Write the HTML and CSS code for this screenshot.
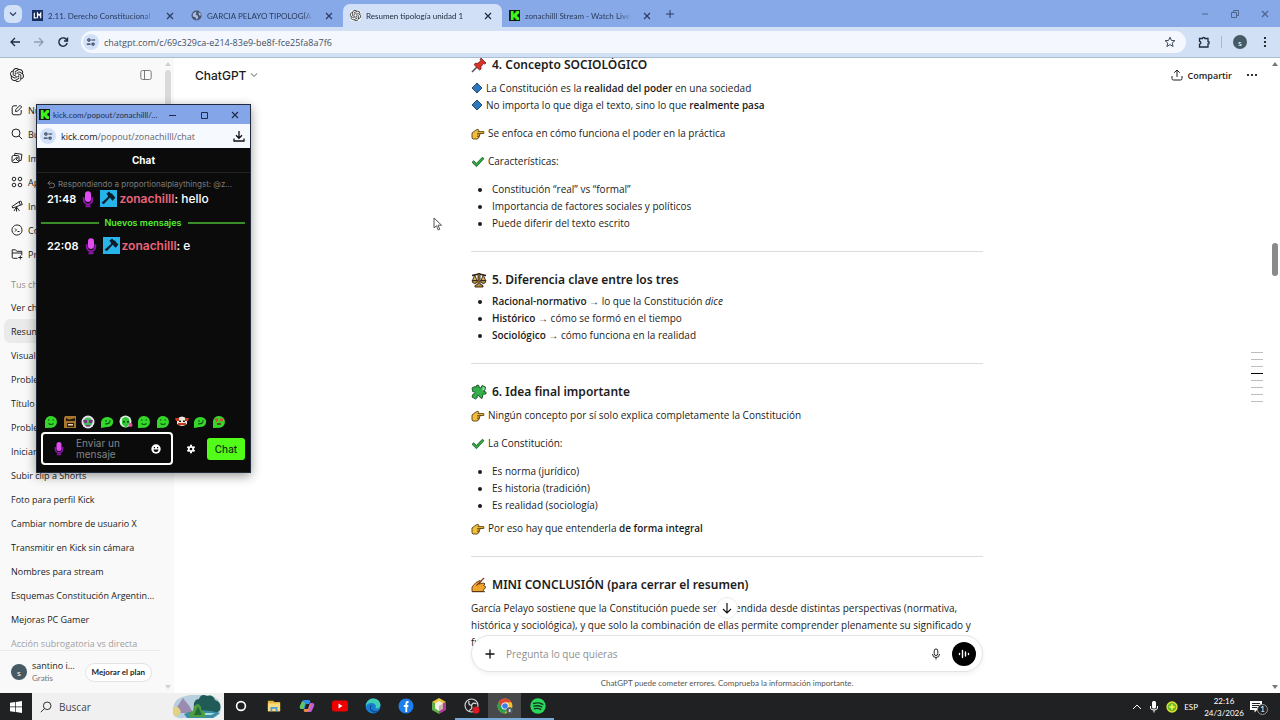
FILE: index.html
```
<!DOCTYPE html>
<html lang="es">
<head>
    <meta charset="UTF-8">
    <meta name="viewport" content="width=device-width, initial-scale=1.0">
    <title>Resumen tipología unidad 1</title>
    <link rel="stylesheet" href="styles.css">
</head>
<body>
    <!-- Shared icons -->
    <svg class="sprite" aria-hidden="true">
        <symbol id="i-close" viewBox="0 0 10 10"><path d="M2 2l6 6M8 2l-6 6" fill="none" stroke="currentColor" stroke-width="1.2"/></symbol>
        <symbol id="i-kick" viewBox="0 0 12 12"><path fill="#101810" d="M0 0h12v12H0z"/><path fill="#3df51c" d="M2 1h3v3h1V3h1V2h1V1h3v3h-1v1H9v2h1v1h1v3H8v-1H7V9H6V8H5v3H2z"/></symbol>
        <symbol id="i-gpt" viewBox="0 0 24 24"><path fill="currentColor" d="M22.2819 9.8211a5.9847 5.9847 0 0 0-.5157-4.9108 6.0462 6.0462 0 0 0-6.5098-2.9A6.0651 6.0651 0 0 0 4.9807 4.1818a5.9847 5.9847 0 0 0-3.9977 2.9 6.0462 6.0462 0 0 0 .7427 7.0966 5.98 5.98 0 0 0 .511 4.9107 6.051 6.051 0 0 0 6.5146 2.9001A5.9847 5.9847 0 0 0 13.2599 24a6.0557 6.0557 0 0 0 5.7718-4.2058 5.9894 5.9894 0 0 0 3.9977-2.9001 6.0557 6.0557 0 0 0-.7475-7.0729zm-9.022 12.6081a4.4755 4.4755 0 0 1-2.8764-1.0408l.1419-.0804 4.7783-2.7582a.7948.7948 0 0 0 .3927-.6813v-6.7369l2.02 1.1686a.071.071 0 0 1 .038.052v5.5826a4.504 4.504 0 0 1-4.4945 4.4944zm-9.6607-4.1254a4.4708 4.4708 0 0 1-.5346-3.0137l.142.0852 4.783 2.7582a.7712.7712 0 0 0 .7806 0l5.8428-3.3685v2.3324a.0804.0804 0 0 1-.0332.0615L9.74 19.9502a4.4992 4.4992 0 0 1-6.1408-1.6464zM2.3408 7.8956a4.485 4.485 0 0 1 2.3655-1.9728V11.6a.7664.7664 0 0 0 .3879.6765l5.8144 3.3543-2.0201 1.1685a.0757.0757 0 0 1-.071 0l-4.8303-2.7865A4.504 4.504 0 0 1 2.3408 7.872zm16.5963 3.8558L13.1038 8.364 15.1192 7.2a.0757.0757 0 0 1 .071 0l4.8303 2.7913a4.4944 4.4944 0 0 1-.6765 8.1042v-5.6772a.79.79 0 0 0-.407-.667zm2.0107-3.0231l-.142-.0852-4.7735-2.7818a.7759.7759 0 0 0-.7854 0L9.409 9.2297V6.8974a.0662.0662 0 0 1 .0284-.0615l4.8303-2.7866a4.4992 4.4992 0 0 1 6.6802 4.66zM8.3065 12.863l-2.02-1.1638a.0804.0804 0 0 1-.038-.0567V6.0742a4.4992 4.4992 0 0 1 7.3757-3.4537l-.142.0805L8.704 5.459a.7948.7948 0 0 0-.3927.6813zm1.0976-2.3654l2.602-1.4998 2.6069 1.4998v2.9994l-2.5974 1.4997-2.6067-1.4997Z"/></symbol>
        <symbol id="i-tune" viewBox="0 0 12 12"><g fill="none" stroke="#26364f" stroke-width="1.3"><circle cx="3.5" cy="3.5" r="1.4"/><path d="M6.5 3.5H11M1 8.5h4.5"/><circle cx="8.5" cy="8.5" r="1.4"/></g></symbol>
        <symbol id="i-mic-pink" viewBox="0 0 14 20"><path fill="none" stroke="#8d15a8" stroke-width="2.2" d="M2 8v3a5 5 0 0 0 10 0V8M7 16v3M4 18.500h6"/><rect x="3.500" y="1" width="7" height="12.500" rx="3.500" fill="#e04cf0"/></symbol>
        <symbol id="i-mod" viewBox="0 0 16 16"><path fill="#27b4ea" d="M0 0h16v16H0z"/><path fill="#0b1d2b" d="M6 3.500L8.500 1.500l1.500 1.500 1.500.5 1 1.500L14.500 7l-2.500 3-1.500-1-.5-1.200-1-.3-5.500 6L1.500 12 7.500 6.500 7.200 5z"/></symbol>
        <symbol id="e-hand" viewBox="0 0 14 12"><path fill="#f2bd3c" stroke="#5a420e" stroke-width=".9" stroke-linejoin="round" d="M1 5l4-3 2-.8.800 1.100L7 3.600h5.800v1.900H9v1.300h-.5v1.500H8v1.400H7.200L6.500 11H2L1 10z"/><path stroke="#5a420e" stroke-width=".7" fill="none" d="M6 5.500h3M6 7h2.600M6 8.500h2"/></symbol>
        <symbol id="e-check" viewBox="0 0 14 12"><path fill="#31a641" stroke="#17622a" stroke-width=".8" stroke-linejoin="round" d="M1 6.300l1.700-1.600 2.800 2.600L11.300 1.300 13 2.600 5.500 10.700z"/></symbol>
        <symbol id="e-diamond" viewBox="0 0 12 12"><path fill="#2b78bd" stroke="#1b3d60" stroke-width=".9" stroke-linejoin="round" d="M6 1l5 5-5 5-5-5z"/></symbol>
        <symbol id="i-chevron" viewBox="0 0 10 10"><path fill="none" stroke="currentColor" stroke-width="1.200" d="M2 3.500l3 3 3-3"/></symbol>
        <symbol id="m-blob" viewBox="0 0 14 14"><path fill="#35d72b" d="M1 13V6a6 6 0 1 1 7 6.800z"/><path fill="none" stroke="#0d4a12" stroke-width="1.200" d="M4 5h1.500M8.500 5H10M4.500 8.500q2.500 2 5 0"/></symbol>
        <symbol id="m-lean" viewBox="0 0 14 14"><path fill="#35d72b" d="M1 13V7q1-5 7-5 6 1 5 6-1 4-6 4z"/><path fill="none" stroke="#0d4a12" stroke-width="1.200" d="M5 6h2M9 6h2M5 9q3 0 5-1.500"/></symbol>
    </svg>

    <!-- Browser tabs -->
    <header class="tabs">
        <button class="tab-search" aria-label="Buscar pestañas"><svg class="s10"><use href="#i-chevron"/></svg></button>
        <div class="tab">
            <svg class="favicon" viewBox="0 0 12 12"><path fill="#142c5e" d="M0 0h12v12H0z"/><path fill="none" stroke="#fff" stroke-width="1.300" d="M2.500 3v5.500H5M6 9V3.500l1.800 2.500 1.700-2.500V9"/></svg>
            <a class="tab-title" href="#">2.11. Derecho Constitucional y Político</a>
            <button class="tab-close" aria-label="Cerrar"><svg class="s10"><use href="#i-close"/></svg></button>
        </div>
        <div class="tab">
            <svg class="favicon" viewBox="0 0 12 12"><circle cx="6" cy="6" r="5.500" fill="#46566f"/><path fill="#a9bde6" d="M2 4l3-2 1 1-1 2 2 1 1 2-2 3-1-3-3-1zM8 3l2 0 1 3-2 0z"/></svg>
            <a class="tab-title" href="#">GARCIA PELAYO TIPOLOGÍA DE LAS</a>
            <button class="tab-close" aria-label="Cerrar"><svg class="s10"><use href="#i-close"/></svg></button>
        </div>
        <div class="tab active">
            <svg class="favicon gpt-fav"><use href="#i-gpt"/></svg>
            <a class="tab-title" href="#">Resumen tipología unidad 1</a>
            <button class="tab-close" aria-label="Cerrar"><svg class="s10"><use href="#i-close"/></svg></button>
        </div>
        <div class="tab">
            <svg class="favicon"><use href="#i-kick"/></svg>
            <a class="tab-title" href="#">zonachilll Stream - Watch Live on Kick</a>
            <button class="tab-close" aria-label="Cerrar"><svg class="s10"><use href="#i-close"/></svg></button>
        </div>
        <button class="new-tab" aria-label="Nueva pestaña"><svg class="s10" viewBox="0 0 10 10"><path d="M5 1v8M1 5h8" fill="none" stroke="currentColor"/></svg></button>
        <div class="window-buttons">
            <button aria-label="Minimizar"><svg class="s10" viewBox="0 0 10 10"><path d="M2 5h6" fill="none" stroke="currentColor"/></svg></button>
            <button aria-label="Restaurar"><svg class="s10" viewBox="0 0 10 10"><path d="M1.500 3.500h5v5h-5zM3.500 3.500v-2h5v5h-2" fill="none" stroke="currentColor"/></svg></button>
            <button aria-label="Cerrar ventana"><svg class="s10"><use href="#i-close"/></svg></button>
        </div>
    </header>

    <!-- Address bar -->
    <nav class="toolbar">
        <button aria-label="Atrás"><svg class="s12" viewBox="0 0 12 12"><path d="M11 6H2M6 2L2 6l4 4" fill="none" stroke="#1f2b3d" stroke-width="1.300"/></svg></button>
        <button aria-label="Adelante"><svg class="s12" viewBox="0 0 12 12"><path d="M1 6h9M6 2l4 4-4 4" fill="none" stroke="#8d9db8" stroke-width="1.300"/></svg></button>
        <button aria-label="Recargar"><svg class="s12" viewBox="0 0 12 12"><path d="M10 4.500A4.200 4.200 0 1 0 10.200 7M10.500 1.500v3.500H7" fill="none" stroke="#1f2b3d" stroke-width="1.400"/></svg></button>
        <div class="address">
            <span class="site-info"><svg class="s10"><use href="#i-tune"/></svg></span>
            <input class="url" type="text" aria-label="Dirección" value="chatgpt.com/c/69c329ca-e214-83e9-be8f-fce25fa8a7f6">
            <button aria-label="Favorito"><svg class="s12" viewBox="0 0 12 12"><path d="M6 1.200l1.400 3.200 3.500.3-2.700 2.300.9 3.500L6 8.600l-3.100 1.900.9-3.500L1.100 4.700l3.500-.3z" fill="none" stroke="#3c4656"/></svg></button>
        </div>
        <button aria-label="Extensiones"><svg class="s12" viewBox="0 0 12 12"><path d="M1.500 2.500h3a1.200 1.200 0 0 1 2.400 0H10v3a1.200 1.200 0 0 1 0 2.400V11H1.500V8.200a1.400 1.400 0 0 0 0-2.800z" fill="none" stroke="#1f2b3d" stroke-width="1.300"/></svg></button>
        <span class="toolbar-sep"></span>
        <button class="avatar" aria-label="Perfil">s</button>
        <button aria-label="Menú"><svg class="s12" viewBox="0 0 12 12"><circle cx="6" cy="2" r="1.100"/><circle cx="6" cy="6" r="1.100"/><circle cx="6" cy="10" r="1.100"/></svg></button>
    </nav>

    <div class="page">
        <aside class="sidebar">
            <div class="sidebar-top">
                <svg class="s14"><use href="#i-gpt"/></svg>
                <button aria-label="Cerrar barra lateral"><svg class="s12" viewBox="0 0 12 12"><rect x=".8" y="1.500" width="10.400" height="9" rx="1.800" fill="none" stroke="#7a7a7a"/><path d="M4.500 1.500v9" stroke="#7a7a7a"/></svg></button>
            </div>
            <ul class="menu">
                <li><a href="#"><svg class="s12" viewBox="0 0 12 12"><path d="M6 1.800H3A1.800 1.800 0 0 0 1.200 3.600V9A1.800 1.800 0 0 0 3 10.800h5.400A1.800 1.800 0 0 0 10.200 9V6M4.500 7.500l.3-2L9 1.300l1.700 1.700-4.200 4.200z"/></svg>Nuevo chat</a></li>
                <li><a href="#"><svg class="s12" viewBox="0 0 12 12"><circle cx="5" cy="5" r="4"/><path d="M8 8l3.200 3.200"/></svg>Buscar chats</a></li>
                <li><a href="#"><svg class="s12" viewBox="0 0 12 12"><rect x="1" y="3.500" width="7" height="7" rx="1.500"/><path d="M3.500 3.500l.4-2.200 7 1-.8 6.200-2 .2M1.500 9l3-2.500L8 10"/><circle cx="6" cy="5.800" r=".7"/></svg>Imágenes</a></li>
                <li><a href="#"><svg class="s12" viewBox="0 0 12 12"><circle cx="3" cy="3" r="1.800"/><circle cx="9" cy="3" r="1.800"/><circle cx="3" cy="9" r="1.800"/><circle cx="9" cy="9" r="1.800"/></svg>Aplicaciones</a></li>
                <li><a href="#"><svg class="s12" viewBox="0 0 12 12"><path d="M1 6.500l7-4.700 1.500 3.400-7.800 2.800zM8 1.800l1.800-.8 1.500 3.500-1.800.7M5.500 7v4.500M5.500 7L3 11M5.500 7l3 4"/></svg>Investigación avanzada</a></li>
                <li><a href="#"><svg class="s12" viewBox="0 0 12 12"><path d="M6 1a5 5 0 1 1-4.500 7.200A5 5 0 0 1 6 1zM4 4.500L5.500 6 4 7.500M6.500 7.500h2"/></svg>Codex</a></li>
                <li><a href="#"><svg class="s12" viewBox="0 0 12 12"><path d="M6.500 10.300H2.300a1.100 1.100 0 0 1-1.100-1.100V1.800H4.500l1.300 1.500h5v4M1.200 5h9.500M9.300 7.500v4M7.300 9.500h4"/></svg>Proyectos</a></li>
            </ul>
            <h2 class="chats-title">Tus chats</h2>
            <ul class="chats">
                <li><a href="#">Ver chat de Kick</a></li>
                <li><a class="current" href="#">Resumen tipología unidad 1</a></li>
                <li><a href="#">Visualizar chat</a></li>
                <li><a href="#">Problema de audio</a></li>
                <li><a href="#">Título para stream</a></li>
                <li><a href="#">Problema con cámara</a></li>
                <li><a href="#">Iniciar stream</a></li>
                <li><a href="#">Subir clip a Shorts</a></li>
                <li><a href="#">Foto para perfil Kick</a></li>
                <li><a href="#">Cambiar nombre de usuario X</a></li>
                <li><a href="#">Transmitir en Kick sin cámara</a></li>
                <li><a href="#">Nombres para stream</a></li>
                <li><a href="#">Esquemas Constitución Argentina 1853</a></li>
                <li><a href="#">Mejoras PC Gamer</a></li>
                <li><a class="faded" href="#">Acción subrogatoria vs directa</a></li>
            </ul>
            <div class="account">
                <span class="avatar">s</span>
                <div class="account-name">
                    <span class="name">santino ignacio</span>
                    <span class="plan">Gratis</span>
                </div>
                <button class="upgrade">Mejorar el plan</button>
            </div>
            <div class="side-scroll"><span class="arrow-up"></span><span class="side-thumb"></span><span class="arrow-down"></span></div>
        </aside>

        <main class="chat">
            <article class="answer">
                <h3><svg class="emoji" viewBox="0 0 16 16"><path d="M1 15l5-5" stroke="#555" stroke-width="1.600"/><path fill="#d8322b" stroke="#6b1c18" stroke-width=".8" stroke-linejoin="round" d="M10 1l5 5-1.500 1-1-.5-2.500 3 0 2.500-1.500 1L3.200 7.800l1-1.500 2.600 0 3-2.600-.6-1.200z"/></svg>4. Concepto SOCIOLÓGICO</h3>
                <p><svg class="bullet-icon"><use href="#e-diamond"/></svg>La Constitución es la <b>realidad del poder</b> en una sociedad<br>
                <svg class="bullet-icon"><use href="#e-diamond"/></svg>No importa lo que diga el texto, sino lo que <b>realmente pasa</b></p>
                <p><svg class="inline-emoji"><use href="#e-hand"/></svg>Se enfoca en cómo funciona el poder en la práctica</p>
                <p><svg class="inline-emoji"><use href="#e-check"/></svg>Características:</p>
                <ul>
                    <li>Constitución “real” vs “formal”</li>
                    <li>Importancia de factores sociales y políticos</li>
                    <li>Puede diferir del texto escrito</li>
                </ul>
                <hr>
                <h3><svg class="emoji" viewBox="0 0 16 16"><path fill="none" stroke="#2a2013" stroke-width="1.500" d="M1 3.500l7-1.500 7 1.500"/><path fill="#b98a3c" stroke="#2a2013" stroke-width=".9" d="M7 1.500h2V12l3 1.500V15H4v-1.500L7 12zM1 8.500h5.500q-.3 3-2.700 3T1 8.500zM9.500 8.500H15q-.3 3-2.700 3t-2.800-3z"/><path fill="#e0b65c" stroke="#2a2013" stroke-width=".9" d="M3.700 3L1.500 8.500H6zM12.300 3l-2.200 5.500h4.500z"/></svg>5. Diferencia clave entre los tres</h3>
                <ul>
                    <li><b>Racional-normativo</b> → lo que la Constitución <i>dice</i></li>
                    <li><b>Histórico</b> → cómo se formó en el tiempo</li>
                    <li><b>Sociológico</b> → cómo funciona en la realidad</li>
                </ul>
                <hr>
                <h3><svg class="emoji" viewBox="0 0 16 16"><path fill="#32b04a" stroke="#174f27" stroke-width=".9" stroke-linejoin="round" d="M1 4l3-1.500 1.200.8Q5 .8 7 1q1.700.4 1 2.500l2 .5 1-2.500 3.500 1.500L14 6l-1.500 1.200 2.500.9q.8 2-1.200 2.100l-1.600-.3L11 14.500 8.500 13q-.2-2-1.700-1.800-1.300.6-.4 2.300L4.500 15 1 13l1.200-3Q4.200 10 4 8.500 3.200 7 1.800 7.800z"/><path fill="#a5d6c0" d="M11.500 2.800l2.300 1-.5 2-1.800 1z"/></svg>6. Idea final importante</h3>
                <p><svg class="inline-emoji"><use href="#e-hand"/></svg>Ningún concepto por sí solo explica completamente la Constitución</p>
                <p><svg class="inline-emoji"><use href="#e-check"/></svg>La Constitución:</p>
                <ul>
                    <li>Es norma (jurídico)</li>
                    <li>Es historia (tradición)</li>
                    <li>Es realidad (sociología)</li>
                </ul>
                <p><svg class="inline-emoji"><use href="#e-hand"/></svg>Por eso hay que entenderla <b>de forma integral</b></p>
                <hr>
                <h3><svg class="emoji" viewBox="0 0 16 16"><path fill="#f0a62d" stroke="#5c3510" stroke-width=".9" stroke-linejoin="round" d="M1 14.500V10l4-4.500 4-2 1 1-2 2.500 5-1 1 1-1.500 1.500 2 1-.5 2-1.500 1-.5 2z"/><path stroke="#8a3a1c" stroke-width="1.300" d="M13 1L5.500 8.500"/><path stroke="#5c3510" d="M1 14.700h13"/></svg>MINI CONCLUSIÓN (para cerrar el resumen)</h3>
                <p>García Pelayo sostiene que la Constitución puede ser entendida desde distintas perspectivas (normativa, histórica y sociológica), y que solo la combinación de ellas permite comprender plenamente su significado y función.</p>
            </article>

            <header class="chat-header">
                <button class="model">ChatGPT <svg class="s10"><use href="#i-chevron"/></svg></button>
                <button class="share"><svg class="s12" viewBox="0 0 12 12"><path d="M6 8V1.200M3.300 3.700L6 1l2.700 2.700M1 7v2.500A1.500 1.500 0 0 0 2.500 11h7A1.500 1.500 0 0 0 11 9.500V7" fill="none" stroke="currentColor"/></svg>Compartir</button>
                <button class="more" aria-label="Más"><svg class="s12" viewBox="0 0 12 12"><circle cx="2" cy="6" r="1.100"/><circle cx="6" cy="6" r="1.100"/><circle cx="10" cy="6" r="1.100"/></svg></button>
            </header>

            <div class="composer-area">
                <button class="scroll-down" aria-label="Bajar"><svg class="s12" viewBox="0 0 12 12"><path d="M6 1v10M2 7l4 4 4-4" fill="none" stroke="#111" stroke-width="1.200"/></svg></button>
                <form class="composer">
                    <button type="button" aria-label="Adjuntar"><svg class="s12" viewBox="0 0 12 12"><path d="M6 1.500v9M1.500 6h9" fill="none" stroke="#111" stroke-width="1.300"/></svg></button>
                    <input type="text" placeholder="Pregunta lo que quieras" aria-label="Pregunta lo que quieras">
                    <button type="button" aria-label="Dictar"><svg class="s12" viewBox="0 0 12 12"><rect x="4.200" y="1" width="3.600" height="6.500" rx="1.800" fill="none" stroke="#222"/><path d="M2.500 6a3.500 3.500 0 0 0 7 0M6 9.500v2" fill="none" stroke="#222"/></svg></button>
                    <button type="button" class="voice" aria-label="Voz"><svg class="s12" viewBox="0 0 12 12"><path d="M1.500 5.500v1M4.500 2.500v7M7.500 4v4M10.500 5.500v1" fill="none" stroke="#fff" stroke-width="1.400" stroke-linecap="round"/></svg></button>
                </form>
                <p class="disclaimer">ChatGPT puede cometer errores. Comprueba la información importante.</p>
            </div>

            <div class="outline"><span></span><span></span><span></span><span class="on"></span><span></span><span></span><span></span><span></span></div>
            <div class="page-scroll"><span class="arrow-up"></span><span class="page-thumb"></span><span class="arrow-down"></span></div>
        </main>
    </div>

    <!-- Kick chat popup -->
    <section class="popup">
        <div class="popup-title">
            <svg class="favicon"><use href="#i-kick"/></svg>
            <span>kick.com/popout/zonachilll/chat - Chat</span>
            <button aria-label="Minimizar"><svg class="s10" viewBox="0 0 10 10"><path d="M1 5.500h7" stroke="currentColor"/></svg></button>
            <button aria-label="Maximizar"><svg class="s10" viewBox="0 0 10 10"><path d="M2.500 2.500h6v6h-6z" fill="none" stroke="currentColor"/></svg></button>
            <button aria-label="Cerrar"><svg class="s10"><use href="#i-close"/></svg></button>
        </div>
        <div class="popup-address">
            <span class="site-info"><svg class="s10"><use href="#i-tune"/></svg></span>
            <span class="popup-url">kick.com<em>/popout/zonachilll/chat</em></span>
            <button aria-label="Descargas"><svg class="s12" viewBox="0 0 12 12"><path d="M6 1v7M3 5.300l3 3 3-3M1 8.500V11h10V8.500" fill="none" stroke="#111" stroke-width="1.300"/></svg></button>
        </div>
        <h2 class="popup-heading">Chat</h2>
        <div class="messages">
            <p class="reply"><svg class="reply-icon" viewBox="0 0 10 10"><path d="M3.500 1L1 3.500 3.500 6M1 3.500h5a2.500 2.500 0 0 1 0 5H2.500" fill="none" stroke="currentColor"/></svg><span>Respondiendo a proportionalplaythingst: @zonachilll</span></p>
            <p class="message">21:48 <svg class="badge-mic"><use href="#i-mic-pink"/></svg><svg class="badge-mod"><use href="#i-mod"/></svg><b>zonachilll</b><span>: hello</span></p>
            <div class="divider">Nuevos mensajes</div>
            <p class="message">22:08 <svg class="badge-mic"><use href="#i-mic-pink"/></svg><svg class="badge-mod"><use href="#i-mod"/></svg><b>zonachilll</b><span>: e</span></p>
        </div>
        <div class="emotes">
            <svg><use href="#m-blob"/></svg>
            <svg viewBox="0 0 14 14"><path fill="#a8762c" d="M2 1h11v12H1V3z"/><path fill="#2b1b0b" d="M3 3l3 1.500L9 4l3-1v3H3zM4 8h7v4H4z"/><path fill="#e8d9bd" d="M5 9h5v1.500H5z"/></svg>
            <svg viewBox="0 0 14 14"><circle cx="7" cy="7" r="6.500" fill="#e9e2ea"/><circle cx="7" cy="7" r="4.500" fill="#46ba5d"/><path fill="#7b3286" d="M2 5h4v3H3zM8 5h4l-1 3H8zM5 10h4v1.500H5z"/></svg>
            <svg><use href="#m-lean"/></svg>
            <svg viewBox="0 0 14 14"><circle cx="6.500" cy="6.500" r="6" fill="#d8f2dc"/><path fill="#35c63a" d="M3 4q4-4 7 0l1 4-4 5-4-4z"/><path fill="#133f16" d="M4 6h2v1.500H4zM8 6h2v1.500H8z"/><circle cx="11.500" cy="10" r="2" fill="#e84a9c"/></svg>
            <svg><use href="#m-blob"/></svg>
            <svg><use href="#m-blob"/></svg>
            <svg viewBox="0 0 14 14"><path fill="#ece6dc" d="M2 4q5-5 10 0v5q-5 4-10 0z"/><path fill="#c33d1d" d="M0 3h4v3H1zM10 3h4l-1 3h-3zM3 8h8v2H3z"/><path fill="#2a1512" d="M4 5.500h2V7H4zM8 5.500h2V7H8z"/></svg>
            <svg><use href="#m-lean"/></svg>
            <svg viewBox="0 0 14 14"><path fill="#35d72b" d="M1 13V6a6 6 0 1 1 7 6.800z"/><path fill="#e2463a" d="M2.500 3.500H6V6L4.500 7zM8 3.500h3.500L10 7 8 6z"/><path d="M5 9h4" stroke="#6b2118" stroke-width="1.500"/></svg>
        </div>
        <form class="send">
            <label class="send-box">
                <svg class="badge-mic"><use href="#i-mic-pink"/></svg>
                <textarea rows="2" placeholder="Enviar un mensaje" aria-label="Enviar un mensaje"></textarea>
                <svg class="s10" viewBox="0 0 10 10"><circle cx="5" cy="5" r="4.700" fill="#fff"/><path fill="#0b0b0b" d="M2.800 3h1.200v1.300H2.800zM6 3h1.200v1.300H6zM2.300 5.500h5.400Q7 8 5 8T2.300 5.500z"/></svg>
            </label>
            <button type="button" class="gear" aria-label="Ajustes"><svg class="s10" viewBox="0 0 10 10"><path d="M5 .8v8.400M1.400 2.900l7.200 4.200M8.600 2.900L1.400 7.100" stroke="#fff" stroke-width="2"/><circle cx="5" cy="5" r="3" fill="#fff"/><circle cx="5" cy="5" r="1.300" fill="#0b0b0b"/></svg></button>
            <button type="button" class="send-button">Chat</button>
        </form>
    </section>

    <svg class="cursor" viewBox="0 0 10 14"><path fill="#fff" stroke="#444" stroke-width=".9" d="M1 1v10l2.500-2.300L5.200 13l1.600-.7L5 8.200h3.500z"/></svg>

    <!-- Windows taskbar -->
    <footer class="taskbar">
        <button class="start" aria-label="Inicio"><svg class="s12" viewBox="0 0 12 12"><path fill="#fff" d="M0 1.800l5.300-.8v4.600H0zM6 .9L12 0v5.600H6zM0 6.300h5.300V11L0 10.200zM6 6.300h6V12l-6-.9z"/></svg></button>
        <label class="search">
            <svg class="s12" viewBox="0 0 12 12"><circle cx="7.200" cy="4.800" r="3.800" fill="none" stroke="#333"/><path d="M4.500 7.500L.8 11.200" stroke="#333"/></svg>
            <input type="text" placeholder="Buscar" aria-label="Buscar">
            <svg class="search-art" viewBox="0 0 50 26"><path fill="#b8cfe0" d="M1 20Q0 6 10 3l8-2h20q10 3 11 12 0 9-8 11H12Q3 25 1 20z"/><path fill="#9b8bb0" d="M3 16l8-12 7 9 3 6H3z"/><path fill="#e3d27e" d="M1 14q5-4 8 4l-5 5Q0 19 1 14z"/><path fill="#215b57" d="M22 14q-1-9 5-9 2-6 8-3 6-2 8 4 7 2 5 10l-4 4-20-1z"/><path fill="#3a8da4" d="M12 20q16-7 36-1l-7 5H15z"/><path fill="#a4dde4" d="M31 19h12l-4 2h-9z"/><path fill="#4f9f3f" d="M17 23q0-5 4-6 0-6 5-7 4 2 3 6 5 1 4 7z"/><path fill="#236b3c" d="M22 21l4-9 4 9z"/></svg>
        </label>
        <div class="apps">
            <button aria-label="Cortana"><svg class="s12" viewBox="0 0 12 12"><circle cx="6" cy="6" r="4.400" fill="none" stroke="#fff" stroke-width="1.600"/></svg></button>
            <button aria-label="Explorador"><svg class="s14" viewBox="0 0 16 16"><path fill="#e7b53c" d="M1 2h6l1.500 1.500H15V14H1z"/><path fill="#f9dd7d" d="M1 5h14v9H1z"/><path fill="#4a9bdb" d="M4 9h8v5h-2v-3H6v3H4z"/></svg></button>
            <button aria-label="Copilot"><svg class="s16" viewBox="0 0 16 16"><path fill="#2f8fe8" d="M5 2h5q1 0 1.500 2L10 6H7L5.500 11H3Q0 11 1 8l2-4.500Q3.500 2 5 2z"/><path fill="#65c658" d="M1 8l2-4.500L6 5 4.500 11H3Q0 11 1 8z"/><path fill="#c35be0" d="M11 5h2q3 0 2 3l-2 4.500Q12.500 14 11 14H8L9 11z"/><path fill="#ee8c46" d="M5.500 11H9l2-5 1 1-2 5q-.8 2-2.500 2H6q-1 0-1.500-2z"/></svg></button>
            <button aria-label="YouTube"><svg class="s16" viewBox="0 0 16 16"><rect y="2.500" width="16" height="11" rx="2.500" fill="#f00000"/><path fill="#fff" d="M6.500 5.500l4 2.500-4 2.500z"/></svg></button>
            <button aria-label="Edge"><svg class="s16" viewBox="0 0 16 16"><circle cx="8" cy="8" r="7.500" fill="#1a7cd0"/><path fill="#3ecfb5" d="M1 6Q4 0 9 .6q6 .9 6.500 6.400Q15 11 10.500 10.500 12 6 7.500 5 3 4.500 1 8z"/><path fill="#0c4a90" d="M5 8q-1 5 4 6.500 3 .5 5-2-5 2-7.500-1Q5 10 7 7z"/></svg></button>
            <button aria-label="Facebook"><svg class="s16" viewBox="0 0 16 16"><circle cx="8" cy="8" r="7.500" fill="#1b80ee"/><path d="M10.500 4H9.700Q8.300 4 8.300 5.500V14M5.800 8h4.500" stroke="#fff" stroke-width="1.800" fill="none"/></svg></button>
            <button aria-label="Juego"><svg class="s16" viewBox="0 0 16 16"><path fill="#e9c83a" d="M8 0l7 4-7 4-7-4z"/><path fill="#62ae49" d="M1 4l7 4v8l-7-4z"/><path fill="#b23b99" d="M15 4L8 8v8l7-4z"/><path fill="#f3eee6" d="M8 3l4 2.500v5L8 13l-4-2.500v-5z"/><path fill="#c9b5a5" d="M8 8l4-2.500v5L8 13z"/></svg></button>
            <button class="open" aria-label="OBS"><svg class="s16" viewBox="0 0 16 16"><circle cx="7.500" cy="7.500" r="6.500" fill="#222" stroke="#ddd" stroke-width="1.100"/><path d="M7.500 7.500Q4 7 5 3M7.500 7.500Q9 3.500 12.500 6M7.500 7.500Q9 11 5 12.500" fill="none" stroke="#ddd" stroke-width="1.200"/><circle cx="12" cy="12" r="3.500" fill="#e01822"/></svg></button>
            <button class="open focused" aria-label="Chrome"><svg class="s16" viewBox="0 0 16 16"><circle cx="8" cy="8" r="7.500" fill="#f2c12d"/><path fill="#dd4536" d="M1.500 4.300A7.500 7.500 0 0 1 14.500 4.300H8L4.700 10z"/><path fill="#2e9e4f" d="M1.500 4.300A7.500 7.500 0 0 0 7.500 15.500L11 9.500 5 9.700z"/><circle cx="8" cy="8" r="3.600" fill="#fff"/><circle cx="8" cy="8" r="2.800" fill="#3b7ded"/><circle cx="12.500" cy="12.500" r="3.200" fill="#4b5c69"/><path d="M13.500 11.500h-1.500v1h1.300v1h-1.600" fill="none" stroke="#fff" stroke-width=".7"/></svg></button>
            <button class="open" aria-label="Spotify"><svg class="s16" viewBox="0 0 16 16"><circle cx="8" cy="8" r="7.700" fill="#2cd75e"/><path d="M3.500 5.500q5-1.500 9.300.8M4 8.200q4.300-1.200 7.800.8M4.500 10.700q3.500-.9 6.300.7" fill="none" stroke="#12351c" stroke-width="1.400" stroke-linecap="round"/></svg></button>
        </div>
        <div class="tray">
            <svg class="s10" viewBox="0 0 10 10"><path d="M1 7l4-4 4 4" fill="none" stroke="#fff"/></svg>
            <svg class="s12" viewBox="0 0 12 12"><rect x="4" y="0" width="4" height="7.500" rx="1.500" fill="#fff"/><path d="M2.500 5v2q0 2 3.500 2t3.500-2V5M6 9v2.500" fill="none" stroke="#fff"/></svg>
            <svg class="s12" viewBox="0 0 12 12"><circle cx="6" cy="6" r="5" fill="#65bd28" stroke="#e8e32f" stroke-width="1.300"/><path d="M6 3.300v5.400M3.300 6h5.400" stroke="#fff34f" stroke-width="1.500"/></svg>
            <span>ESP</span>
            <time class="clock">22:16<br>24/3/2026</time>
            <div class="notices"><svg class="s12" viewBox="0 0 12 12"><path fill="#fff" d="M0 0h12v9H7l-2.500 2.500V9H0z"/><path stroke="#222" d="M2 2.500h8M2 4.500h8M2 6.500h5"/></svg><span class="count">1</span></div>
        </div>
    </footer>
</body>
</html>
```
FILE: styles.css
```
* {
    box-sizing: border-box;
}

body {
    margin: 0;
    height: 100vh;
    display: flex;
    flex-direction: column;
    overflow: hidden;
    position: relative;
    font-family: "Segoe UI", "Open Sans", "Noto Sans", sans-serif;
    font-size: 10px;
    color: #1c1c1c;
    background-color: #fff;
}

button {
    display: flex;
    align-items: center;
    justify-content: center;
    flex-shrink: 0;
    padding: 0;
    border: none;
    background: none;
    font: inherit;
    color: inherit;
    cursor: pointer;
}

input, textarea {
    min-width: 0;
    padding: 0;
    border: none;
    outline: none;
    background: none;
    font: inherit;
    color: inherit;
}

a {
    color: inherit;
    text-decoration: none;
}

ul {
    margin: 0;
    padding: 0;
    list-style: none;
}

svg {
    flex-shrink: 0;
}

.sprite {
    display: none;
}

.s10 { width: 10px; height: 10px; }
.s12 { width: 12px; height: 12px; }
.s14 { width: 14px; height: 14px; }
.s16 { width: 16px; height: 16px; }

.favicon {
    width: 11px;
    height: 11px;
}

/* Small print */
.tab-title, .popup-title, .disclaimer, .plan, .upgrade, .tray {
    font-family: "Lato", sans-serif;
    font-size: 8px;
}

/* Tabs */
.tabs {
    display: flex;
    align-items: flex-end;
    height: 27px;
    flex-shrink: 0;
    padding-left: 4px;
    background-color: #87a9e8;
    color: #2b3b5c;
}

.tab-search {
    width: 18px;
    height: 18px;
    margin: 0 3px 4px 0;
    border-radius: 6px;
    background-color: #d3e1f8;
}

.tab {
    display: flex;
    align-items: center;
    gap: 5px;
    flex: 0 1 159px;
    min-width: 0;
    height: 23px;
    padding: 0 9px 0 7px;
    border-radius: 7px 7px 0 0;
}

.tab.active {
    background-color: #d2e0f7;
    color: #1c2738;
}

.gpt-fav {
    background-color: #f3f6fb;
    border-radius: 3px;
    color: #333;
}

.tab-title {
    flex: 1;
    min-width: 0;
    overflow: hidden;
    white-space: nowrap;
    -webkit-mask-image: linear-gradient(to right, #000 90%, transparent);
    mask-image: linear-gradient(to right, #000 90%, transparent);
}

.tab-close {
    width: 10px;
    height: 10px;
    margin-left: 6px;
}

.new-tab {
    width: 18px;
    height: 27px;
}

.window-buttons {
    display: flex;
    margin-left: auto;
    padding-right: 10px;
    gap: 20px;
    height: 27px;
    color: #4e6590;
}

/* Toolbar */
.toolbar {
    display: flex;
    align-items: center;
    height: 31px;
    flex-shrink: 0;
    padding: 0 9px;
    gap: 12px;
    background-color: #d2e0f5;
    border-bottom: 1px solid #a9bdd2;
}

.address {
    flex: 1;
    display: flex;
    align-items: center;
    gap: 5px;
    height: 22px;
    padding: 0 10px 0 2px;
    border-radius: 11px;
    background-color: #f4f8fe;
}

.site-info {
    display: flex;
    align-items: center;
    justify-content: center;
    flex-shrink: 0;
    width: 16px;
    height: 16px;
    border-radius: 50%;
    background-color: #d3e1f8;
}

.url {
    flex: 1;
    font-size: 9px;
    color: #45505f;
}

.toolbar-sep {
    width: 1px;
    height: 12px;
    margin: 0 -1px;
    background-color: #9bb8e6;
}

.avatar {
    display: flex;
    align-items: center;
    justify-content: center;
    flex-shrink: 0;
    width: 14px;
    height: 14px;
    border-radius: 50%;
    background-color: #455a64;
    color: #fff;
    font-size: 8px;
}

/* Page */
.page {
    flex: 1;
    min-height: 0;
    display: flex;
}

.sidebar {
    position: relative;
    display: flex;
    flex-direction: column;
    width: 174px;
    flex-shrink: 0;
    overflow: hidden;
    background-color: #f9f9f9;
    font-size: 9px;
}

.sidebar-top {
    display: flex;
    align-items: center;
    justify-content: space-between;
    height: 34px;
    flex-shrink: 0;
    margin-bottom: 6px;
    padding: 0 22px 0 10px;
}

.menu a {
    display: flex;
    align-items: center;
    gap: 5px;
    height: 24px;
    padding-left: 11px;
    white-space: nowrap;
}

.menu svg {
    fill: none;
    stroke: #222;
}

.chats-title {
    margin: 9px 0 0 11px;
    height: 20px;
    line-height: 20px;
    font-size: 9px;
    font-weight: normal;
    color: #8f8f8f;
}

.chats {
    flex: 1;
    min-height: 0;
    overflow: hidden;
    padding: 0 10px 0 4px;
}

.chats a {
    display: block;
    height: 24px;
    padding: 0 7px;
    line-height: 25px;
    border-radius: 7px;
    overflow: hidden;
    white-space: nowrap;
    text-overflow: ellipsis;
}

.chats .current {
    background-color: #eaeaea;
}

.chats .faded {
    color: #a0a0a0;
}

.account {
    display: flex;
    align-items: center;
    gap: 5px;
    height: 43px;
    flex-shrink: 0;
    margin-right: 14px;
    padding: 0 8px 0 11px;
    border-top: 1px solid #ebebeb;
}

.account .avatar {
    width: 16px;
    height: 16px;
}

.account-name {
    flex: 1;
    min-width: 0;
    display: flex;
    flex-direction: column;
    line-height: 12px;
}

.name {
    overflow: hidden;
    white-space: nowrap;
    text-overflow: ellipsis;
}

.plan {
    color: #777;
}

.upgrade {
    height: 19px;
    padding: 0 6px;
    border: 1px solid #e3e3e3;
    border-radius: 10px;
    background-color: #fff;
    font-weight: 700;
}

.side-scroll, .page-scroll {
    position: absolute;
    top: 0;
    right: 0;
    bottom: 0;
    width: 10px;
    display: flex;
    flex-direction: column;
    align-items: center;
    padding: 4px 0;
}

.side-scroll {
    right: 1px;
}

.arrow-up, .arrow-down {
    border: 3px solid transparent;
    border-top: none;
    border-bottom: 4px solid #777;
}

.arrow-down {
    margin-top: auto;
    border-top: 4px solid #777;
    border-bottom: none;
}

.side-scroll .arrow-up {
    border-bottom-color: #d0d0d0;
}

.side-scroll .arrow-down {
    border-top-color: #d0d0d0;
}

.side-thumb {
    width: 6px;
    height: 180px;
    margin-top: 4px;
    border-radius: 3px;
    background-color: #dadada;
}

.page-thumb {
    width: 6px;
    height: 33px;
    margin-top: 177px;
    border-radius: 3px;
    background-color: #8a8a8a;
}

/* Conversation */
.chat {
    position: relative;
    flex: 1;
    overflow: hidden;
}

.chat-header {
    position: absolute;
    top: 0;
    left: 0;
    right: 0;
    display: flex;
    align-items: center;
    height: 34px;
    padding: 0 22px 0 21px;
}

.model {
    gap: 3px;
    font-family: "Inter", sans-serif;
    font-size: 12px;
    font-weight: 500;
}

.model svg {
    color: #999;
}

.share {
    gap: 5px;
    margin-left: auto;
    margin-right: 14px;
    font-size: 9px;
    font-weight: 600;
}

.answer {
    width: 100%;
    max-width: 512px;
    margin: 0 auto;
    line-height: 17px;
}

.answer h3 {
    display: flex;
    align-items: center;
    gap: 5px;
    margin: 0 0 8px;
    font-family: "Noto Sans", sans-serif;
    font-size: 12px;
    font-weight: 600;
    line-height: 14px;
}

.answer p {
    margin: 0 0 11px;
}

.answer ul {
    padding-left: 21px;
    list-style: disc;
}

.answer h3 + ul {
    margin-top: -2px;
}

.answer ul + p {
    margin-top: 6px;
}

.answer b {
    font-weight: 600;
}

.answer hr {
    margin: 19px 0 21px;
    border: none;
    border-top: 1px solid #dcdcdc;
}

.emoji {
    width: 16px;
    height: 16px;
    margin: -1px 0;
}

.inline-emoji {
    width: 14px;
    height: 12px;
    margin-right: 3px;
    vertical-align: -3px;
}

.bullet-icon {
    width: 12px;
    height: 12px;
    margin-right: 3px;
    vertical-align: -2px;
}

.composer-area {
    position: absolute;
    left: 0;
    right: 0;
    bottom: 0;
    display: flex;
    flex-direction: column;
    align-items: center;
}

.scroll-down {
    width: 22px;
    height: 22px;
    margin-bottom: 16px;
    border: 1px solid #ececec;
    border-radius: 50%;
    background-color: #fff;
}

.composer {
    display: flex;
    align-items: center;
    gap: 10px;
    width: 100%;
    max-width: 512px;
    height: 37px;
    padding: 0 6px 0 12px;
    border: 1px solid #e4e4e4;
    border-radius: 19px;
    background-color: #fff;
    box-shadow: 0 2px 5px rgba(0, 0, 0, 0.06);
}

.composer input {
    flex: 1;
}

.composer input::placeholder {
    color: #8f8f8f;
}

.voice {
    width: 24px;
    height: 24px;
    border-radius: 50%;
    background-color: #000;
}

.disclaimer {
    margin: 0;
    width: 100%;
    max-width: 512px;
    height: 21px;
    line-height: 22px;
    text-align: center;
    color: #555;
}

.outline {
    position: absolute;
    top: 294px;
    right: 17px;
    display: flex;
    flex-direction: column;
    gap: 6px;
}

.outline span {
    width: 12px;
    height: 1px;
    background-color: #bdbdbd;
}

.outline .on {
    background-color: #000;
}

/* Popup window */
.popup {
    position: absolute;
    left: 36px;
    top: 104px;
    width: 215px;
    height: 369px;
    display: flex;
    flex-direction: column;
    border: 1px solid #1f2a3c;
    background-color: #0b0b0b;
    color: #fff;
    font-family: "Inter", sans-serif;
    box-shadow: 0 3px 10px rgba(0, 0, 0, 0.4);
}

.popup-title {
    display: flex;
    align-items: center;
    height: 19px;
    flex-shrink: 0;
    padding: 0 10px 0 2px;
    gap: 21px;
    background-color: #84a6e8;
    color: #1f2d4a;
}

.popup-title span {
    flex: 1;
    min-width: 0;
    margin: 0 -12px 0 -18px;
    overflow: hidden;
    white-space: nowrap;
    text-overflow: ellipsis;
}

.popup-address {
    display: flex;
    align-items: center;
    gap: 5px;
    height: 24px;
    flex-shrink: 0;
    padding: 0 5px 0 3px;
    background-color: #f6f9fe;
    color: #222;
    font-family: "Segoe UI", "Open Sans", sans-serif;
    font-size: 9px;
}

.popup-url {
    flex: 1;
}

.popup-url em {
    font-style: normal;
    color: #666;
}

.popup-heading {
    height: 25px;
    flex-shrink: 0;
    margin: 0;
    line-height: 24px;
    text-align: center;
    font-size: 10px;
    font-weight: 700;
    border-bottom: 1px solid #242424;
}

.messages {
    flex: 1;
    min-height: 0;
    padding: 5px 5px 0 4px;
}

.reply {
    display: flex;
    align-items: center;
    gap: 2px;
    height: 12px;
    margin: 0;
    padding: 0 8px 0 6px;
    font-size: 8px;
    color: #7a7a7a;
}

.reply span {
    overflow: hidden;
    white-space: nowrap;
    text-overflow: ellipsis;
}

.reply-icon {
    width: 9px;
    height: 9px;
}

.message {
    display: flex;
    align-items: center;
    height: 17px;
    margin: 0;
    padding-left: 6px;
    font-size: 11px;
    font-weight: 600;
}

.message b {
    color: #e9647c;
    font-size: 12px;
    font-weight: 600;
}

.message span {
    font-size: 12px;
    font-weight: 500;
}

.badge-mic {
    width: 12px;
    height: 18px;
}

.message .badge-mic {
    margin: 0 6px;
}

.badge-mod {
    width: 17px;
    height: 17px;
    margin-right: 2px;
}

.divider {
    display: flex;
    align-items: center;
    gap: 6px;
    height: 15px;
    margin: 8px 0 7px;
    font-size: 9px;
    font-weight: 600;
    color: #53f032;
}

.divider::before, .divider::after {
    content: "";
    flex: 1;
    height: 2px;
    background-color: #398c28;
}

.emotes {
    display: flex;
    justify-content: space-between;
    padding: 0 24px 3px 7px;
}

.emotes svg {
    width: 14px;
    height: 14px;
}

.send {
    display: flex;
    align-items: center;
    gap: 13px;
    padding: 0 5px 7px 4px;
}

.send-box {
    flex: 1;
    min-width: 0;
    display: flex;
    align-items: center;
    gap: 12px;
    height: 33px;
    padding: 0 10px 0 11px;
    border: 2px solid #fff;
    border-radius: 4px;
}

.send-box textarea {
    flex: 1;
    height: 22px;
    resize: none;
    overflow: hidden;
    line-height: 11px;
}

.send-box textarea::placeholder {
    color: #858585;
}

.send-box .badge-mic {
    width: 10px;
    height: 15px;
}

.send-button {
    width: 38px;
    height: 22px;
    margin-left: -2px;
    border-radius: 3px;
    background-color: #53fc18;
    color: #14300c;
    font-weight: 500;
}

.cursor {
    position: absolute;
    left: 433px;
    top: 217px;
    width: 10px;
    height: 14px;
}

/* Taskbar */
.taskbar {
    display: flex;
    height: 27px;
    flex-shrink: 0;
    background-color: #202122;
    color: #fff;
}

.start {
    width: 32px;
}

.search {
    display: flex;
    align-items: center;
    gap: 7px;
    width: 192px;
    padding: 0 2px 0 8px;
    background-color: #f0f0f0;
    color: #333;
}

.search input {
    flex: 1;
}

.search input::placeholder {
    color: #444;
}

.search-art {
    width: 50px;
    height: 26px;
}

.apps {
    display: flex;
}

.apps button {
    width: 33px;
    border-bottom: 2px solid transparent;
}

.apps .open {
    border-bottom-color: #76a9d8;
}

.apps .focused {
    background-color: #48494b;
}

.tray {
    display: flex;
    align-items: center;
    gap: 6px;
    margin-left: auto;
    padding-right: 8px;
}

.clock {
    width: 40px;
    text-align: center;
    line-height: 12px;
}

.notices {
    position: relative;
    width: 22px;
}

.notices svg {
    display: block;
}

.count {
    position: absolute;
    left: 7px;
    top: 3px;
    width: 11px;
    height: 11px;
    line-height: 9px;
    text-align: center;
    border: 1px solid #999;
    border-radius: 50%;
    background-color: #202122;
}
```
